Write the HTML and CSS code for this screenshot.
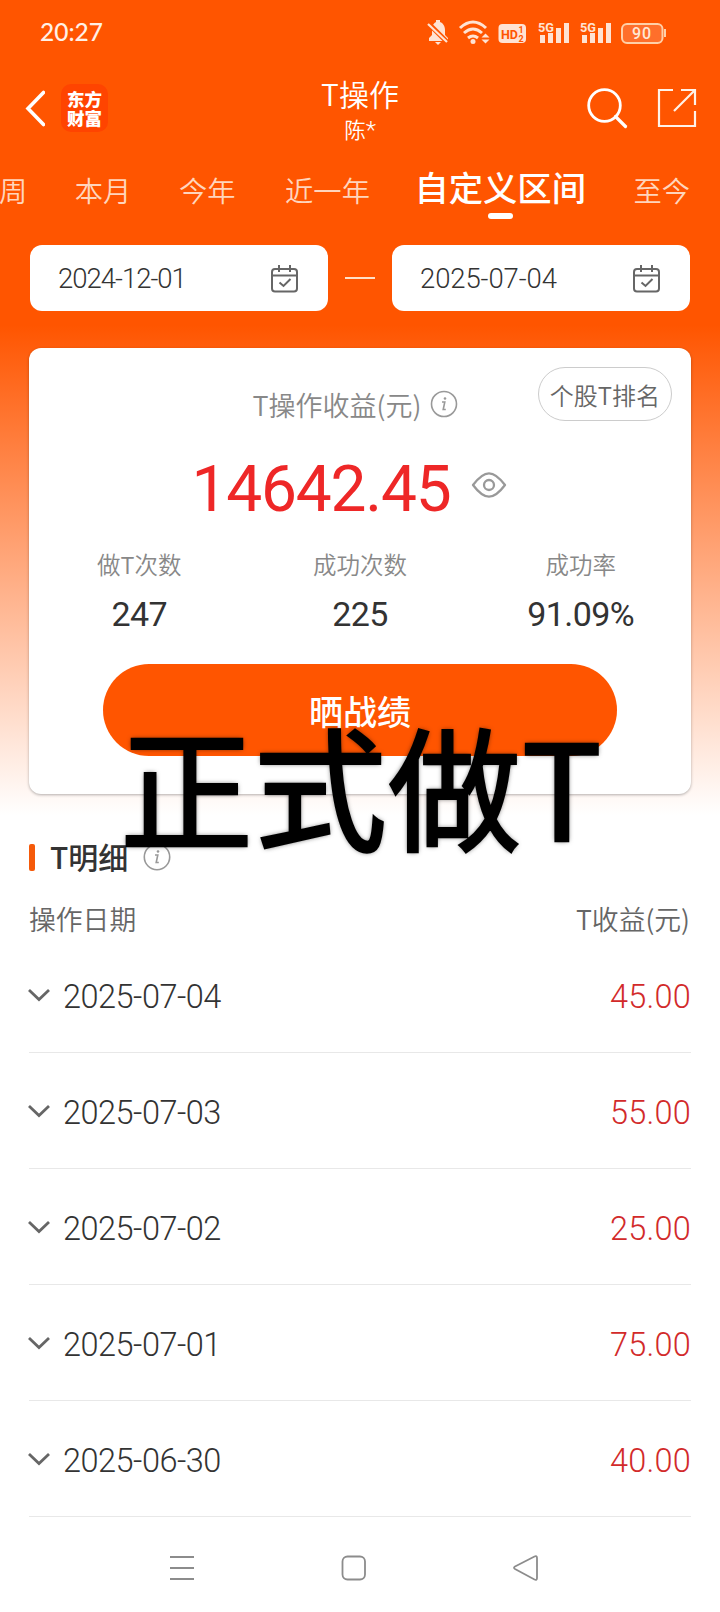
FILE: index.html
```
<!DOCTYPE html>
<html lang="zh-CN">

<head>
    <meta charset="UTF-8">
    <meta name="viewport" content="width=device-width, initial-scale=1.0">
    <title>T操作</title>
    <link rel="stylesheet" href="styles.css">
</head>

<body>
    <div class="page">
        <!-- status bar -->
        <div class="status">
            <span class="time">20:27</span>
            <svg class="status-icons" width="242" height="30" viewBox="0 0 242 30">
                <g fill="#ffe3d3">
                    <path d="M3 24v-3l3-3v-6c0-4 2-6 4-7V3h4v2c3 1 5 4 5 8v5l3 3v3z" />
                    <path d="M9 25h6l-3 3z" />
                </g>
                <path d="M2 6l20 20" stroke="#ff5500" stroke-width="5" />
                <path d="M2 7l19 18" stroke="#ffe3d3" stroke-width="2.2" />
                <g fill="none" stroke="#ffe3d3" stroke-width="3">
                    <path d="M34 11q13-12 26 0" />
                    <path d="M38 16q9-8 18 0" />
                    <path d="M42 21q5-4 10 0" />
                </g>
                <circle cx="47" cy="24.500" r="2.500" fill="#ffe3d3" />
                <path d="M55.500 20.500l4-4 4 4zM55.500 22.500l4 4 4-4z" fill="#ffe3d3" />
                <rect x="72.500" y="7" width="27.500" height="19" rx="4" fill="#ffe3d3" />
                <text x="75" y="21.500" class="hd" textLength="17" lengthAdjust="spacingAndGlyphs">HD</text>
                <text x="92.500" y="16" class="hd-num">1</text>
                <text x="92.500" y="24.500" class="hd-num">2</text>
                <g fill="#ffe3d3">
                    <text x="112" y="14.500" class="net" textLength="16" lengthAdjust="spacingAndGlyphs">5G</text>
                    <path d="M114 18h5v8h-5zM122 16h5v10h-5zM130 11h5v15h-5zM138 6h5v20h-5z" />
                    <text x="154" y="14.500" class="net" textLength="16" lengthAdjust="spacingAndGlyphs">5G</text>
                    <path d="M156 18h5v8h-5zM164 16h5v10h-5zM172 11h5v15h-5zM180 6h5v20h-5z" />
                </g>
                <rect x="196" y="7" width="40.500" height="19" rx="5" fill="#ff6f2b" stroke="#ffd0a8" stroke-width="2" />
                <path d="M239 12v8" stroke="#ffd0a8" stroke-width="2" />
                <text x="206" y="21.500" class="battery" textLength="19">90</text>
            </svg>
        </div>

        <!-- header -->
        <div class="header">
            <div class="header-side">
                <svg width="22" height="38" viewBox="0 0 22 38">
                    <path d="M20.500 3.500L5 19.500l15.500 16" fill="none" stroke="#fff" stroke-width="3.600" stroke-linecap="round" />
                </svg>
                <div class="logo"><span>东方</span><span>财富</span></div>
            </div>
            <div class="header-title">
                <h1>T操作</h1>
                <p>陈<span class="mask">*</span></p>
            </div>
            <div class="header-side right">
                <svg width="42" height="42" viewBox="0 0 42 42" fill="none" stroke="#fff" stroke-width="2.800">
                    <circle cx="18.500" cy="18.500" r="15.800" />
                    <path d="M29.500 29.500l10 10" stroke-width="3.200" stroke-linecap="round" />
                </svg>
                <svg width="40" height="40" viewBox="0 0 40 40" fill="none" stroke="#fff2e8" stroke-width="2.200">
                    <path d="M16 2H2v36h36V23M24 2h14v15M37 3L17 23" />
                </svg>
            </div>
        </div>

        <!-- period tabs -->
        <div class="tabs">
            <span class="tab">周</span>
            <span class="tab">本月</span>
            <span class="tab">今年</span>
            <span class="tab year">近一年</span>
            <span class="tab active">自定义区间</span>
            <span class="tab">至今</span>
        </div>

        <div class="range">
            <div class="date-box">
                <span class="start">2024-12-01</span>
                <svg width="28" height="28" viewBox="0 0 28 28" fill="none" stroke="#666" stroke-width="2">
                    <rect x="1" y="4" width="25" height="22.500" rx="3" />
                    <path d="M1 10.500h25M8 0v7M19 0v7M8.500 17.500l4 3.500 7-7" />
                </svg>
            </div>
            <i class="dash"></i>
            <div class="date-box">
                <span>2025-07-04</span>
                <svg width="28" height="28" viewBox="0 0 28 28" fill="none" stroke="#666" stroke-width="2">
                    <rect x="1" y="4" width="25" height="22.500" rx="3" />
                    <path d="M1 10.500h25M8 0v7M19 0v7M8.500 17.500l4 3.500 7-7" />
                </svg>
            </div>
        </div>

        <!-- profit card -->
        <div class="card">
            <div class="rank">个股T排名</div>
            <div class="card-label">
                <span>T操作收益(元)</span>
                <svg width="28" height="28" viewBox="0 0 28 28">
                    <circle cx="14" cy="14" r="12.500" fill="none" stroke="#999" stroke-width="1.600" />
                    <path d="M12 12h2.800l-1.600 7.500h2.600" fill="none" stroke="#999" stroke-width="1.600" />
                    <circle cx="15" cy="8.500" r="1.300" fill="#999" />
                </svg>
            </div>
            <div class="amount">
                <strong>14642.45</strong>
                <svg width="36" height="28" viewBox="0 0 36 28" fill="none" stroke="#999" stroke-width="2.300">
                    <path d="M2 14C8 6 13 2.300 18 2.300S28 6 34 14C28 22 23 25.700 18 25.700S8 22 2 14z" stroke-linejoin="round" />
                    <circle cx="18" cy="14" r="5" />
                </svg>
            </div>
            <div class="stats">
                <div class="stat"><span>做T次数</span><b>247</b></div>
                <div class="stat"><span>成功次数</span><b>225</b></div>
                <div class="stat"><span>成功率</span><b>91.09%</b></div>
            </div>
            <div class="share">晒战绩</div>
        </div>

        <!-- detail list -->
        <div class="detail-title">
            <h2>T明细</h2>
            <svg width="28" height="28" viewBox="0 0 28 28">
                <circle cx="14" cy="14" r="12.700" fill="none" stroke="#999" stroke-width="1.600" />
                <path d="M12 12h2.800l-1.600 7.500h2.600" fill="none" stroke="#999" stroke-width="1.600" />
                <circle cx="15" cy="8.500" r="1.300" fill="#999" />
            </svg>
        </div>
        <div class="list-head"><span>操作日期</span><span>T收益(元)</span></div>
        <div class="list">
            <div class="row">
                <svg class="arrow" viewBox="0 0 24 14"><path d="M2 2l10 9.500L22 2" /></svg>
                <span>2025-07-04</span><em>45.00</em>
            </div>
            <div class="row">
                <svg class="arrow" viewBox="0 0 24 14"><path d="M2 2l10 9.500L22 2" /></svg>
                <span>2025-07-03</span><em>55.00</em>
            </div>
            <div class="row">
                <svg class="arrow" viewBox="0 0 24 14"><path d="M2 2l10 9.500L22 2" /></svg>
                <span>2025-07-02</span><em>25.00</em>
            </div>
            <div class="row">
                <svg class="arrow" viewBox="0 0 24 14"><path d="M2 2l10 9.500L22 2" /></svg>
                <span>2025-07-01</span><em>75.00</em>
            </div>
            <div class="row">
                <svg class="arrow" viewBox="0 0 24 14"><path d="M2 2l10 9.500L22 2" /></svg>
                <span>2025-06-30</span><em>40.00</em>
            </div>
        </div>

        <!-- system navigation -->
        <div class="nav">
            <svg width="26" height="26" viewBox="0 0 26 26"><path d="M1 2h24M1 13h24M1 24h24" /></svg>
            <svg width="26" height="26" viewBox="0 0 26 26"><rect x="1.500" y="1.500" width="22.500" height="23" rx="5" /></svg>
            <svg width="26" height="26" viewBox="0 0 26 26"><path d="M2 11.500L21.500 1.500q2.500-1 2.500 1.500v20q0 2.500-2.500 1.500L2 14q-2-1.200 0-2.500z" /></svg>
        </div>

        <div class="caption">正式做T</div>
    </div>
</body>

</html>
```
FILE: styles.css
```
* {
    box-sizing: border-box;
    margin: 0;
    padding: 0;
}

body {
    background: #fff;
    font-family: "Noto Sans CJK SC", sans-serif;
    font-weight: 350;
    color: #333;
}

svg {
    display: block;
    flex-shrink: 0;
}

.page {
    position: relative;
    display: flex;
    flex-direction: column;
    width: 720px;
    height: 1612px;
    overflow: hidden;
    background: linear-gradient(#ff5500 325px, #fff 815px);
}

.status {
    display: flex;
    justify-content: space-between;
    align-items: center;
    height: 64px;
    padding: 0 52px 1px 40px;
}

.time {
    font: 500 24.5px/30px Lato, sans-serif;
    color: #fff0e6;
}

.hd {
    font: 700 13px Roboto, sans-serif;
    fill: #ff5500;
}

.hd-num {
    font: 700 9px Roboto, sans-serif;
    fill: #ff5500;
}

.net {
    font: 700 13px Roboto, sans-serif;
}

.battery {
    font: 500 16px Roboto, sans-serif;
    fill: #ffe8d5;
}

.header {
    display: grid;
    grid-template-columns: 1fr 200px 1fr;
    height: 88px;
    padding: 0 23px;
}

.header-side {
    display: flex;
    align-items: center;
    height: 88px;
    gap: 16px;
}

.header-side.right {
    justify-content: flex-end;
    gap: 29px;
}

.logo {
    display: flex;
    flex-direction: column;
    justify-content: center;
    width: 47px;
    height: 48px;
    padding-bottom: 1px;
    border-radius: 10px;
    background: #ff4400;
    font: 900 17.5px/19px "Noto Sans CJK SC", sans-serif;
    text-align: center;
    color: #fff;
}

.header-title {
    padding-top: 9px;
    text-align: center;
    color: #fff;
}

.header-title h1 {
    font-size: 30px;
    line-height: 40px;
    font-weight: 350;
}

.header-title p {
    font-size: 21.5px;
    line-height: 31px;
}

.mask {
    font-family: Roboto, sans-serif;
    font-size: 24px;
}

.tabs {
    display: flex;
    align-items: center;
    gap: 47.5px;
    height: 82px;
    padding-bottom: 6px;
    margin-left: -1px;
    white-space: nowrap;
}

.tab {
    font-size: 28.3px;
    line-height: 40px;
    color: #ffd5bd;
}

.tab.year {
    margin: 0 -3px 0 2px;
}

.tab.active {
    position: relative;
    font-size: 34.3px;
    font-weight: 500;
    line-height: 40px;
    padding-bottom: 9px;
    color: #fff;
}

.tab.active::after {
    content: '';
    position: absolute;
    left: 50%;
    bottom: -4px;
    width: 25px;
    height: 6px;
    margin-left: -12px;
    border-radius: 3px;
    background: #fff;
}

.range {
    display: flex;
    align-items: center;
    justify-content: space-between;
    margin: 11px 30px 0;
}

.date-box {
    display: flex;
    align-items: center;
    justify-content: space-between;
    width: 298px;
    height: 66px;
    padding: 1px 29px 0 28px;
    border-radius: 12px;
    background: #fff;
    font: 350 27.5px/40px Roboto, sans-serif;
    letter-spacing: -0.1px;
}

.date-box .start {
    letter-spacing: -1px;
}

.dash {
    width: 30px;
    height: 2px;
    background: #ffe0c8;
}

.card {
    position: relative;
    display: flex;
    flex-direction: column;
    align-items: center;
    height: 446px;
    margin: 37px 29px 0;
    padding-top: 36px;
    border-radius: 12px;
    background: #fff;
    box-shadow: 0 1px 3px rgba(0, 0, 0, 0.3);
}

.rank {
    position: absolute;
    top: 19px;
    right: 19px;
    width: 134px;
    height: 54px;
    border: 1px solid #ccc;
    border-radius: 27px;
    font-size: 24px;
    line-height: 54px;
    text-align: center;
    color: #666;
}

.card-label {
    display: flex;
    align-items: center;
    gap: 9px;
    height: 40px;
    margin-right: 9px;
    font-size: 27px;
    color: #888;
}

.amount {
    display: flex;
    align-items: center;
    gap: 20px;
    height: 80px;
    margin-top: 21px;
    margin-right: 22px;
}

.amount strong {
    font: 450 64px/80px Roboto, sans-serif;
    letter-spacing: -1.2px;
    padding-top: 9px;
    color: #ee2727;
}

.stats {
    display: grid;
    grid-template-columns: repeat(3, 1fr);
    width: 100%;
    margin-top: 21px;
}

.stat {
    display: flex;
    flex-direction: column;
    align-items: center;
}

.stat span {
    font-size: 23.5px;
    line-height: 36px;
    color: #888;
}

.stat b {
    font: 400 34px/40px Roboto, sans-serif;
    letter-spacing: -0.6px;
    margin-top: 12px;
}

.share {
    width: 514px;
    height: 92px;
    margin-top: 30px;
    border-radius: 46px;
    background: #ff5500;
    font-size: 34px;
    font-weight: 500;
    line-height: 94px;
    text-align: center;
    color: #fff;
}

.detail-title {
    display: flex;
    align-items: center;
    gap: 15px;
    height: 44px;
    margin: 41px 29px 0;
}

.detail-title::before {
    content: '';
    width: 6px;
    height: 27px;
    border-radius: 2px;
    background: #f55a0a;
}

.detail-title h2 {
    font-size: 30px;
    font-weight: 450;
    line-height: 42px;
    padding-bottom: 2px;
}

.list-head {
    display: flex;
    justify-content: space-between;
    height: 40px;
    margin: 20px 30px 0 29px;
    font-size: 26.8px;
    line-height: 40px;
    color: #666;
}

.list {
    margin: -2px 29px 0;
}

.row {
    display: flex;
    align-items: center;
    height: 116px;
    padding-top: 4px;
    border-bottom: 1px solid #e8e8e8;
    font: 350 32.5px/40px Roboto, sans-serif;
    letter-spacing: -0.5px;
}

.arrow {
    width: 24px;
    height: 14px;
    margin: 0 12px 3px -2px;
    fill: none;
    stroke: #666;
    stroke-width: 2.8;
}

.row em {
    margin-left: auto;
    font-style: normal;
    letter-spacing: 0.2px;
    color: #d22a2a;
}

.nav {
    display: flex;
    gap: 146px;
    margin-top: 38px;
    padding-left: 169px;
}

.nav svg {
    fill: none;
    stroke: #8c8c8c;
    stroke-width: 1.8;
}

/* big caption over the card */
.caption {
    position: absolute;
    left: 120px;
    top: 703px;
    font-size: 133px;
    font-weight: 400;
    line-height: 160px;
    letter-spacing: 1px;
    white-space: nowrap;
    color: #000;
    -webkit-text-stroke: 2.5px #000;
    text-shadow: 0 0 5px rgba(0, 0, 0, 0.7);
}
```
